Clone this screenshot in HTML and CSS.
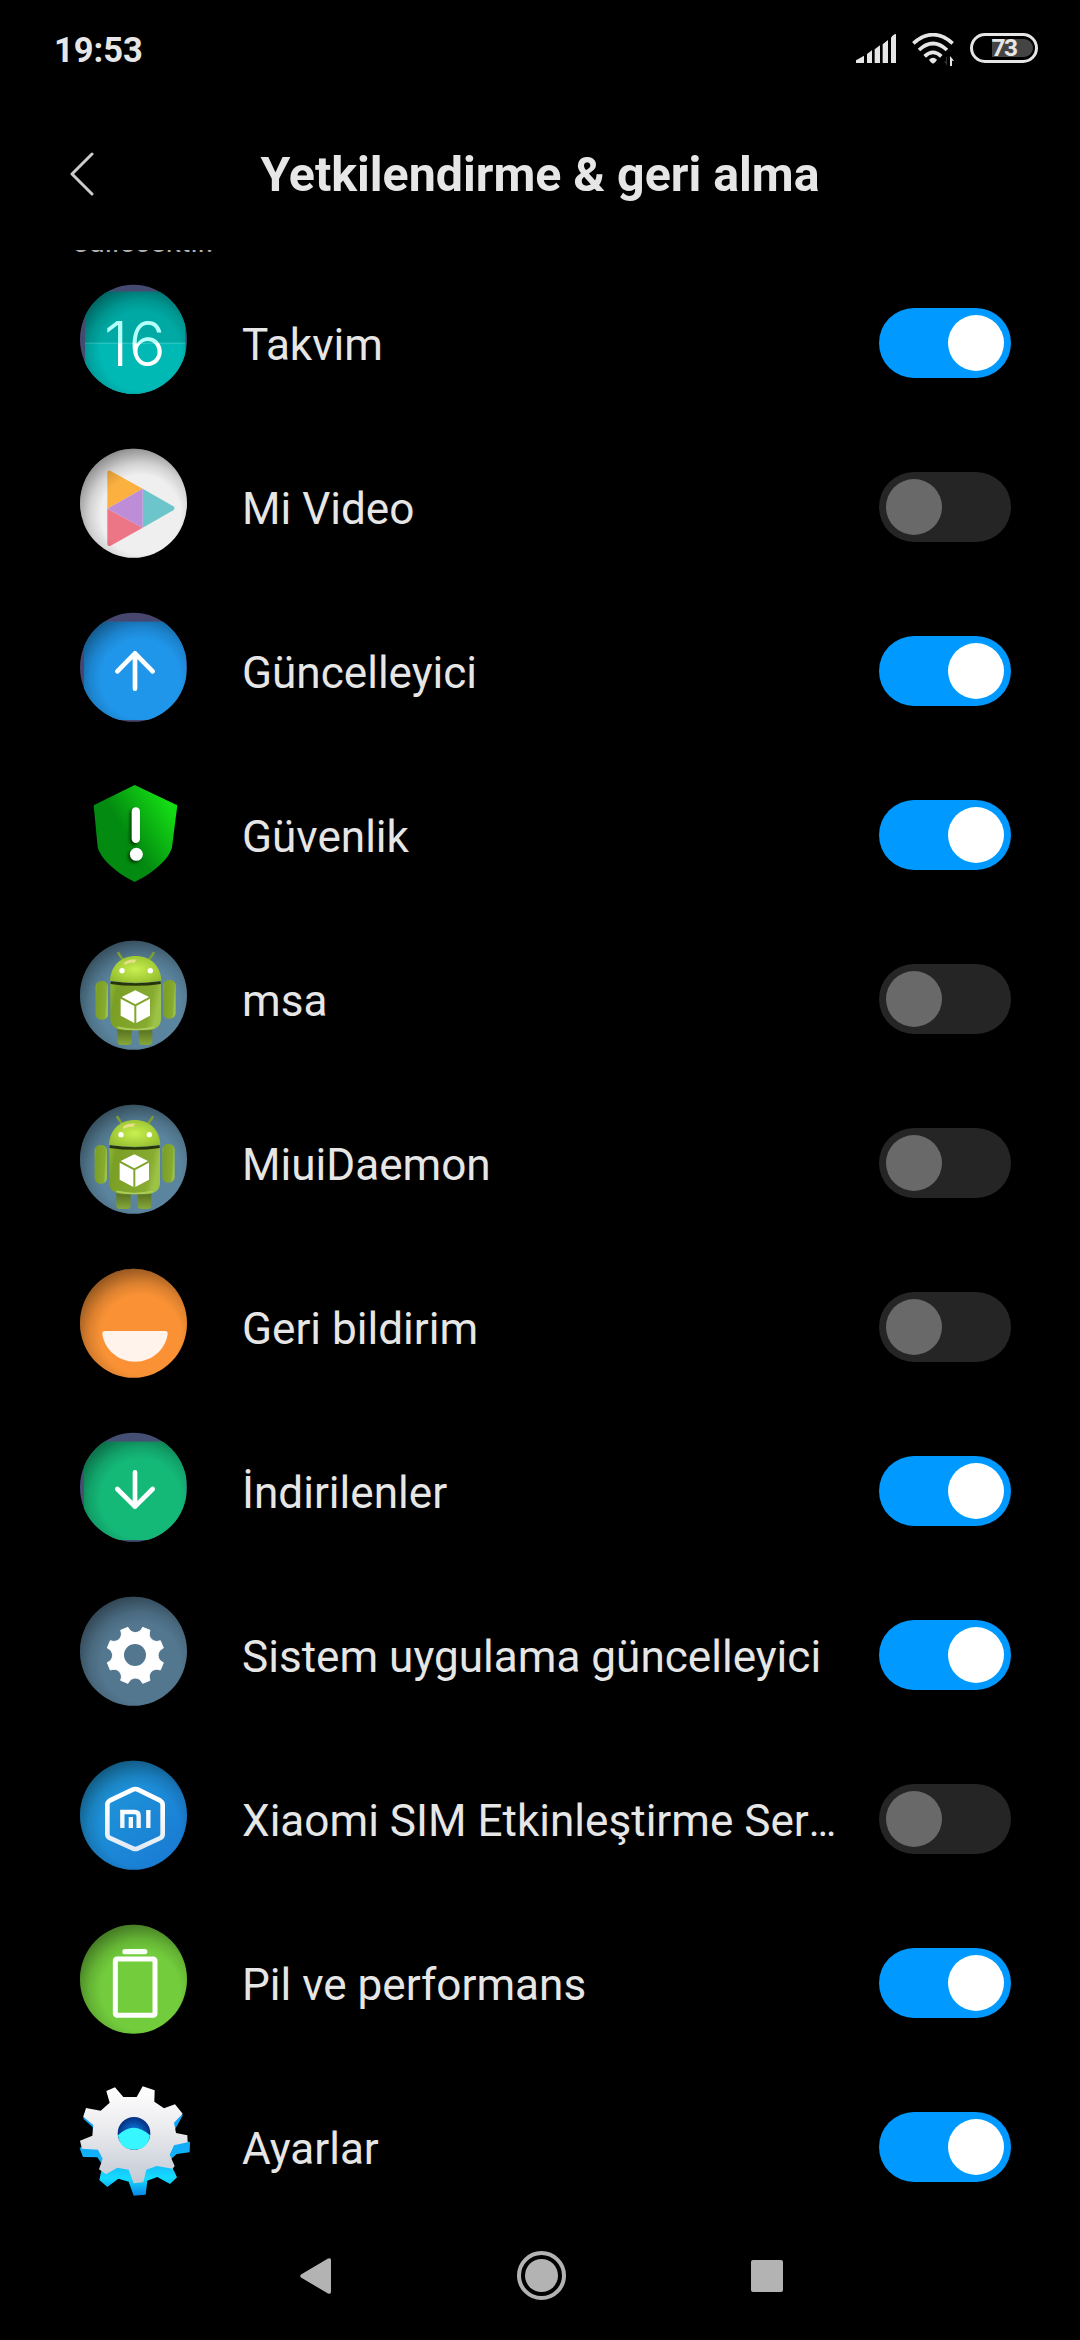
FILE: index.html
```html
<!DOCTYPE html>
<html lang="tr">
<head>
    <meta charset="UTF-8">
    <meta name="viewport" content="width=device-width, initial-scale=1.0">
    <title>Yetkilendirme &amp; geri alma</title>
    <link rel="stylesheet" href="styles.css">
</head>
<body>
    <!-- Shared gradients and the android icon -->
    <svg class="defs" width="0" height="0">
        <defs>
            <radialGradient id="shade" gradientUnits="userSpaceOnUse" cx="182" cy="200" r="205">
                <stop offset="0.58" stop-color="#000" stop-opacity="0"/>
                <stop offset="0.75" stop-color="#000" stop-opacity="0.12"/>
                <stop offset="1" stop-color="#000" stop-opacity="0.42"/>
            </radialGradient>
            <clipPath id="round"><ellipse cx="160.500" cy="166" rx="160.500" ry="163.500"/></clipPath>
            <linearGradient id="digits" gradientUnits="userSpaceOnUse" x1="0" y1="112" x2="0" y2="246">
                <stop offset="0.48" stop-color="#b4fffa"/>
                <stop offset="0.5" stop-color="#fff"/>
            </linearGradient>
            <linearGradient id="shield" x1="0.42" y1="0.55" x2="0.9" y2="0.2">
                <stop offset="0" stop-color="#038a10"/>
                <stop offset="1" stop-color="#14dc14"/>
            </linearGradient>
            <linearGradient id="sim" x1="0" y1="0" x2="1" y2="1">
                <stop offset="0" stop-color="#1f9fdc"/>
                <stop offset="1" stop-color="#1976d2"/>
            </linearGradient>
            <linearGradient id="simLine" gradientUnits="userSpaceOnUse" x1="0" y1="80" x2="0" y2="275">
                <stop offset="0.3" stop-color="#fff"/>
                <stop offset="1" stop-color="#dfe9f4"/>
            </linearGradient>
            <radialGradient id="droidHead" cx="0.5" cy="0.5" r="0.6">
                <stop offset="0" stop-color="#c8f050"/>
                <stop offset="1" stop-color="#94bd2e"/>
            </radialGradient>
            <linearGradient id="droidBody" x1="0" y1="0" x2="1" y2="0.2">
                <stop offset="0" stop-color="#8fb833"/>
                <stop offset="0.15" stop-color="#7b9f25"/>
                <stop offset="0.85" stop-color="#87aa30"/>
                <stop offset="1" stop-color="#9cc246"/>
            </linearGradient>
            <linearGradient id="droidLeg" x1="0" y1="0" x2="0" y2="1">
                <stop offset="0" stop-color="#52691c"/>
                <stop offset="1" stop-color="#86a83a"/>
            </linearGradient>
            <linearGradient id="gearFace" x1="0" y1="0" x2="0" y2="1">
                <stop offset="0" stop-color="#fff"/>
                <stop offset="0.4" stop-color="#ededf0"/>
                <stop offset="1" stop-color="#c3cad4"/>
            </linearGradient>
            <linearGradient id="gearSide" x1="0" y1="0" x2="0" y2="1">
                <stop offset="0" stop-color="#0a9cf5"/>
                <stop offset="0.6" stop-color="#14b4fa"/>
                <stop offset="0.8" stop-color="#14dcff"/>
                <stop offset="1" stop-color="#0a86e8"/>
            </linearGradient>
            <radialGradient id="gearHole" cx="0.5" cy="0.5" r="0.5">
                <stop offset="0" stop-color="#0a8cf0"/>
                <stop offset="1" stop-color="#052f82"/>
            </radialGradient>
        </defs>
        <symbol id="droid" viewBox="0 0 330 330">
            <path d="M115 39L129 60M221 39L207 60" stroke="#7fa030" stroke-width="7" stroke-linecap="round"/>
            <path d="M112 262h43v42q0 11-11 11h-21q-11 0-11-11zM176 262h41v42q0 11-11 11h-19q-11 0-11-11z" fill="url(#droidLeg)"/>
            <rect x="47" y="123" width="37" height="116" rx="16" fill="url(#droidBody)"/>
            <rect x="250" y="120" width="37" height="116" rx="16" fill="url(#droidBody)"/>
            <path d="M91 128h152v108q0 35-50 35h-52q-50 0-50-35z" fill="url(#droidBody)"/>
            <path d="M112 262q55 13 110 0" stroke="#a9cc5c" stroke-width="5" fill="none"/>
            <path d="M92 128q75 11 150 0" stroke="#27340a" stroke-width="8" fill="none"/>
            <path d="M90 122C92 78 122 48 167 48s75 30 77 74q-77 12-154 0z" fill="url(#droidHead)"/>
            <path d="M131 70q12-14 38-11l-6 10q-14-2-28 5z" fill="#e6df85"/>
            <circle cx="126" cy="92" r="8" fill="#fff"/>
            <circle cx="211" cy="92" r="8" fill="#fff"/>
            <path d="M166 151l41 20-41 22-41-22zM122 176l41 22v51l-41-22zM210 176l-41 22v51l41-22z" fill="#fff"/>
        </symbol>
    </svg>

    <div class="status-bar">
        <span class="clock">19:53</span>
        <svg class="signal" viewBox="0 0 120 87">
            <path d="M0 87V79L24 65V87zM33 87V60L48 49V87zM56 87V46L72 34V87zM80 87V31L96 18V87zM105 87V11Q112 0 120 0V87z" fill="#e6e6e6"/>
        </svg>
        <svg class="wifi" viewBox="0 0 126 99">
            <g fill="none" stroke="#e6e6e6" stroke-width="11">
                <path d="M4 31Q63-21 122 31"/>
                <path d="M21 51Q63 12 105 51"/>
                <path d="M38 70Q63 46 88 70"/>
            </g>
            <path d="M51 80Q63 68 75 80Q72 87 63 92Q54 87 51 80z" fill="#e6e6e6"/>
            <path d="M105 71v28l-9-14h6V71z" fill="#333"/>
            <path d="M114 99V69l12 14h-6v16z" fill="#e6e6e6"/>
        </svg>
        <div class="battery"><span>73</span></div>
    </div>

    <div class="header">
        <svg class="back" viewBox="0 0 24 44">
            <path d="M22 2L2 22L22 42" fill="none" stroke="#ccc" stroke-width="3" stroke-linecap="round" stroke-linejoin="round"/>
        </svg>
        <h1>Yetkilendirme &amp; geri alma</h1>
    </div>

    <div class="list">
        <p class="note">edilecektir.</p>

        <div class="row">
            <svg class="icon" viewBox="0 0 330 330">
                <g clip-path="url(#round)">
                    <rect width="330" height="330" fill="#454b70"/>
                    <rect x="15" y="23" width="301" height="307" fill="#00a9a3"/>
                    <rect x="15" y="177" width="301" height="153" fill="#00b9b5"/>
                    <rect x="15" y="176" width="301" height="3" fill="#35cbc8"/>
                    <rect x="15" y="23" width="301" height="307" fill="url(#shade)"/>
                </g>
                <text class="day" x="72 146" y="246" fill="url(#digits)">16</text>
            </svg>
            <span class="label">Takvim</span>
            <div class="switch on"></div>
        </div>

        <div class="row">
            <svg class="icon" viewBox="0 0 330 330">
                <g clip-path="url(#round)">
                    <rect width="330" height="330" fill="#efefef"/>
                    <path d="M82 75Q82 65 92 69L188 122L82 182z" fill="#fbb040"/>
                    <path d="M82 182L188 239L92 293Q82 297 82 287z" fill="#ec7586"/>
                    <path d="M188 122L280 175Q287 181 280 187L188 239z" fill="#6cc5ca"/>
                    <path d="M188 122V239L82 182z" fill="#bd8dd8"/>
                    <rect width="330" height="330" fill="url(#shade)"/>
                </g>
            </svg>
            <span class="label">Mi Video</span>
            <div class="switch"></div>
        </div>

        <div class="row">
            <svg class="icon" viewBox="0 0 330 330">
                <g clip-path="url(#round)">
                    <rect width="330" height="330" fill="#46466e"/>
                    <rect x="12" y="29" width="307" height="295" fill="#2096ea"/>
                    <rect x="12" y="29" width="307" height="295" fill="url(#shade)"/>
                </g>
                <path d="M165 230V124M112 178L165 124L218 178" fill="none" stroke="#fff" stroke-width="14" stroke-linecap="round" stroke-linejoin="round"/>
            </svg>
            <span class="label">Güncelleyici</span>
            <div class="switch on"></div>
        </div>

        <div class="row">
            <svg class="icon" viewBox="0 0 330 330">
                <path d="M164 27L292 88L276 214C268 248 222 290 164 318C106 290 62 248 53 214L41 88z" fill="url(#shield)"/>
                <g class="mark">
                    <rect x="155" y="94" width="25" height="107" rx="12.500" fill="#fff"/>
                    <circle cx="169" cy="235" r="19.500" fill="#fff"/>
                </g>
            </svg>
            <span class="label">Güvenlik</span>
            <div class="switch on"></div>
        </div>

        <div class="row">
            <svg class="icon" viewBox="0 0 330 330">
                <g clip-path="url(#round)">
                    <rect width="330" height="330" fill="#5b859e"/>
                    <rect width="330" height="330" fill="url(#shade)"/>
                </g>
                <use href="#droid" width="330" height="330"/>
            </svg>
            <span class="label">msa</span>
            <div class="switch"></div>
        </div>

        <div class="row">
            <svg class="icon" viewBox="0 0 330 330">
                <g clip-path="url(#round)">
                    <rect width="330" height="330" fill="#5b859e"/>
                    <rect width="330" height="330" fill="url(#shade)"/>
                </g>
                <use href="#droid" x="-3" width="330" height="330"/>
            </svg>
            <span class="label">MiuiDaemon</span>
            <div class="switch"></div>
        </div>

        <div class="row">
            <svg class="icon" viewBox="0 0 330 330">
                <g clip-path="url(#round)">
                    <rect width="330" height="330" fill="#fa9235"/>
                    <rect width="330" height="330" fill="url(#shade)"/>
                </g>
                <path d="M76 189H255Q264 189 263 198C256 246 215 281 165 281S74 246 67 198Q66 189 76 189z" fill="#fff3ec"/>
            </svg>
            <span class="label">Geri bildirim</span>
            <div class="switch"></div>
        </div>

        <div class="row">
            <svg class="icon" viewBox="0 0 330 330">
                <g clip-path="url(#round)">
                    <rect width="330" height="330" fill="#454f74"/>
                    <rect x="12" y="29" width="307" height="295" fill="#14b978"/>
                    <rect x="12" y="29" width="307" height="295" fill="url(#shade)"/>
                </g>
                <path d="M165 121V224M112 171L165 224L218 171" fill="none" stroke="#fff" stroke-width="14" stroke-linecap="round" stroke-linejoin="round"/>
            </svg>
            <span class="label">İndirilenler</span>
            <div class="switch on"></div>
        </div>

        <div class="row">
            <svg class="icon" viewBox="0 0 330 330">
                <g clip-path="url(#round)">
                    <rect width="330" height="330" fill="#53778f"/>
                    <rect width="330" height="330" fill="url(#shade)"/>
                </g>
                <path transform="translate(166 178)" d="M-22-84C-13-63 13-63 22-84L44-75C35-54 54-35 75-44L84-22C63-13 63 13 84 22L75 44C54 35 35 54 44 75L22 84C13 63-13 63-22 84L-44 75C-35 54-54 35-75 44L-84 22C-63 13-63-13-84-22L-75-44C-54-35-35-54-44-75Z" fill="#fff" stroke="#fff" stroke-width="3" stroke-linejoin="round"/>
                <circle cx="165" cy="177" r="33" fill="#53778f"/>
            </svg>
            <span class="label">Sistem uygulama güncelleyici</span>
            <div class="switch on"></div>
        </div>

        <div class="row">
            <svg class="icon" viewBox="0 0 330 330">
                <g clip-path="url(#round)">
                    <rect width="330" height="330" fill="url(#sim)"/>
                    <rect width="330" height="330" fill="url(#shade)"/>
                </g>
                <g fill="none" stroke="url(#simLine)" stroke-width="14">
                    <path d="M158 89Q166 85 174 89L241 122Q248 126 248 134V222Q248 230 241 234L174 265Q166 269 158 265L89 234Q82 230 82 222V134Q82 126 89 122z"/>
                    <path d="M127 204V156H164Q176 156 176 168V204M152.500 171V204M205 150V204" stroke-width="13"/>
                </g>
            </svg>
            <span class="label">Xiaomi SIM Etkinleştirme Ser<span class="dots">…</span></span>
            <div class="switch"></div>
        </div>

        <div class="row">
            <svg class="icon" viewBox="0 0 330 330">
                <g clip-path="url(#round)">
                    <rect width="330" height="330" fill="#72cc3c"/>
                    <rect width="330" height="330" fill="url(#shade)"/>
                </g>
                <rect x="127" y="75" width="75" height="16" rx="8" fill="#f8fff4"/>
                <rect x="106" y="105" width="119" height="169" rx="5" fill="none" stroke="#fff" stroke-width="15"/>
            </svg>
            <span class="label">Pil ve performans</span>
            <div class="switch on"></div>
        </div>

        <div class="row">
            <svg class="icon" viewBox="0 0 330 330">
                <g transform="translate(-60 -564)">
                    <path d="M72 640L70 656L98 682L100 712L59 745L69 771L112 772L128 795L118 840L142 861L175 836L206 845L221 887L257 884L262 842L292 831L330 852L351 832L336 800L330 780L350 762L389 757L390 726L352 720L344 690L369 645L310 625z" fill="url(#gearSide)"/>
                    <path d="M139 573L165 562L190 591L230 591L248 559L284 571L283 605L312 625L345 613L368 641L342 668L348 699L382 706L383 727L342 736L329 764L344 798L338 806L290 798L259 809L250 847L221 850L206 809L172 803L138 823L117 808L128 776L114 749L66 746L60 722L97 707L100 675L70 650L78 624L122 632L149 608z" fill="url(#gearFace)"/>
                    <circle cx="222" cy="700" r="49" fill="url(#gearHole)"/>
                    <path d="M174 706Q220 661 270 706Q264 749 222 749T174 706z" fill="#38f6ff"/>
                </g>
            </svg>
            <span class="label">Ayarlar</span>
            <div class="switch on"></div>
        </div>
    </div>

    <div class="nav-bar">
        <svg class="nav-back" viewBox="0 0 31 36">
            <path d="M1 16.500L28 .5Q31-.5 31 2V34Q31 36.500 28 35.500L1 19.500Q-.5 18 1 16.500z" fill="#b3b3b3"/>
        </svg>
        <svg class="nav-home" viewBox="0 0 49 49">
            <circle cx="24.500" cy="24.500" r="22.500" fill="none" stroke="#b3b3b3" stroke-width="4"/>
            <circle cx="24.500" cy="24.500" r="16.500" fill="#b3b3b3"/>
        </svg>
        <div class="nav-recent"></div>
    </div>
</body>
</html>
```
FILE: styles.css
```css
body {
    display: flex;
    flex-direction: column;
    width: 1080px;
    height: 2340px;
    margin: 0;
    overflow: hidden;
    background-color: #000;
    color: #e6e6e6;
    font-family: Roboto, sans-serif;
}
.defs {
    position: absolute;
}

/* Status bar */
.status-bar {
    display: flex;
    align-items: center;
    height: 96px;
    padding: 0 42px 0 54px;
    box-sizing: border-box;
    flex: none;
}
.clock {
    flex: 1;
    margin-top: 3px;
    font-size: 34.5px;
    font-weight: bold;
}
.signal {
    width: 40px;
    height: 29px;
    margin-right: 16px;
}
.wifi {
    width: 42px;
    height: 33px;
    margin: 3px 16px 0 0;
}
.battery {
    display: flex;
    align-items: center;
    justify-content: center;
    width: 68px;
    height: 30px;
    box-sizing: border-box;
    border: 3px solid #e6e6e6;
    border-radius: 15px;
    font-size: 24.5px;
    font-weight: bold;
    line-height: 18px;
}
.battery span {
    width: 41px;
    height: 18px;
    margin-left: 16px;
    border-radius: 0 9px 9px 0;
    background-color: #444;
    letter-spacing: -1.5px;
}

/* Header */
.header {
    display: grid;
    grid-template-columns: 190px 1fr 190px;
    align-items: center;
    height: 154px;
    flex: none;
}
.back {
    width: 24px;
    height: 44px;
    margin: 1px 0 0 70px;
}
.header h1 {
    margin: 3px 0 0;
    font-size: 48.3px;
    font-weight: bold;
    text-align: center;
    white-space: nowrap;
}

/* App list, scrolled to the bottom */
.list {
    display: flex;
    flex-direction: column;
    justify-content: flex-end;
    height: 1979px;
    overflow: hidden;
    flex: none;
}
.note {
    margin: 0 0 -1px 72.5px;
    font-size: 29.5px;
    line-height: 40px;
    color: #b0b0b0;
}
.row {
    display: flex;
    align-items: center;
    height: 164px;
    padding: 0 69px 0 80px;
    flex: none;
}
.icon {
    width: 110px;
    height: 110px;
    margin: 0 52px 8px 0;
    overflow: visible;
    flex: none;
}
.day {
    font-family: Inter, sans-serif;
    font-size: 184px;
    font-weight: 300;
}
.mark {
    filter: drop-shadow(-6px 6px 5px rgba(0, 30, 0, 0.7));
}
.label {
    flex: 1;
    margin-top: 4px;
    font-size: 44.1px;
    line-height: 60px;
    white-space: nowrap;
}
.dots {
    letter-spacing: -1px;
    font-size: 41px;
}
.switch {
    display: flex;
    width: 132px;
    height: 70px;
    padding: 7px;
    box-sizing: border-box;
    border-radius: 35px;
    background-color: #252525;
    flex: none;
}
.switch::before {
    content: "";
    width: 56px;
    height: 56px;
    border-radius: 50%;
    background-color: #696969;
}
.switch.on {
    justify-content: flex-end;
    background-color: #0099ff;
}
.switch.on::before {
    background-color: #fff;
}

/* Navigation bar */
.nav-bar {
    display: flex;
    align-items: center;
    justify-content: space-between;
    height: 93px;
    padding: 0 297px 0 300px;
    flex: none;
}
.nav-back {
    width: 31px;
    height: 36px;
}
.nav-home {
    width: 49px;
    height: 49px;
}
.nav-recent {
    width: 32px;
    height: 32px;
    border-radius: 2px;
    background-color: #b3b3b3;
}
```
